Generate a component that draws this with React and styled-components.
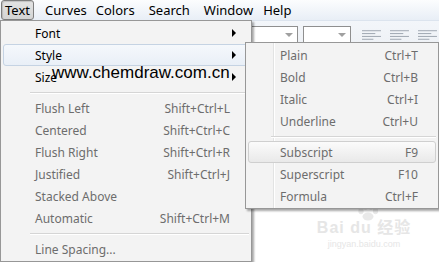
import React from "react";
import styled, { createGlobalStyle } from "styled-components";

const Global = createGlobalStyle`
  html, body { margin: 0; padding: 0; }
  body {
    background: #ffffff;
    font-family: "Noto Sans", "Open Sans", sans-serif;
    overflow: hidden;
  }
`;

const Window = styled.div`
  position: relative;
  width: 439px;
  height: 262px;
  display: flex;
  flex-direction: column;
  overflow: hidden;
`;

const MenuBar = styled.div`
  height: 21px;
  display: flex;
  align-items: center;
  padding-left: 1px;
  background: linear-gradient(#fcfdfe, #e8eef6);
  border-bottom: 1px solid #dce4ee;
  box-sizing: border-box;
`;

const BarItem = styled.div`
  font-size: 13px;
  line-height: 18px;
  color: #000;
  padding: 0 3px;
  margin-right: ${(p) => p.$gap || 1}px;
  border: 1px solid ${(p) => (p.$open ? "#7e7e7e" : "transparent")};
  border-radius: 3px;
  background: ${(p) => (p.$open ? "linear-gradient(#e4e4e4, #d4d4d4)" : "transparent")};
  box-shadow: ${(p) => (p.$open ? "inset 1px 1px 1px rgba(0,0,0,0.15)" : "none")};
`;

const Toolbar = styled.div`
  height: 27px;
  display: flex;
  align-items: center;
  gap: 5px;
  padding-left: 230px;
  background: linear-gradient(#f3f6fa, #eef1f5);
  box-sizing: border-box;
`;

const Combo = styled.div`
  width: ${(p) => p.$w}px;
  height: 17px;
  border: 1px solid #8f8f8f;
  background: #fff;
  display: flex;
  justify-content: flex-end;
  align-items: center;
  padding-right: 4px;
  box-sizing: border-box;
  &::after {
    content: "";
    border-left: 4px solid transparent;
    border-right: 4px solid transparent;
    border-top: 4px solid #a0a0a0;
  }
`;

const AlignIcon = styled.svg`
  width: 22px;
  height: 12px;
  margin-left: ${(p) => p.$ml || 0}px;
`;

const Canvas = styled.div`
  flex: 1;
  background: #ffffff;
`;

const Menu = styled.div`
  position: absolute;
  left: ${(p) => p.$left}px;
  top: ${(p) => p.$top}px;
  width: ${(p) => p.$w}px;
  padding: 1px 0 1px;
  background: #f3f3f3;
  border: 1px solid #979797;
  box-shadow: 2px 2px 2px rgba(0, 0, 0, 0.35);
  box-sizing: border-box;
  display: flex;
  flex-direction: column;
  z-index: ${(p) => p.$z || 1};
  ${(p) =>
    p.$gutter
      ? `background-image: linear-gradient(90deg, transparent 27px, #e2e3e3 27px, #e2e3e3 28px, #ffffff 28px, #ffffff 29px, transparent 29px);`
      : ""}
`;

const Row = styled.div`
  height: 22px;
  margin: 0 2px;
  display: flex;
  align-items: center;
  padding: 0 ${(p) => p.$pr}px 0 ${(p) => p.$pl}px;
  font-size: 12px;
  color: ${(p) => (p.$enabled ? "#000" : "#6d6d6d")};
  border: 1px solid transparent;
  border-radius: 3px;
  box-sizing: border-box;
  ${(p) =>
    p.$hover === "blue" &&
    `border-color: #c5d3e3; background: linear-gradient(#f5f8fc, #e9eff7);`}
  ${(p) =>
    p.$hover === "grey" &&
    `border-color: #cfcfcf; background: linear-gradient(#fbfbfb, #e9e9e9);`}
`;

const Label = styled.span`
  flex: 1;
  white-space: nowrap;
`;

const Shortcut = styled.span`
  white-space: nowrap;
  margin-right: ${(p) => p.$mr || 0}px;
`;

const Arrow = styled.span`
  width: 0;
  height: 0;
  border-top: 4px solid transparent;
  border-bottom: 4px solid transparent;
  border-left: 4px solid #000;
`;

const Separator = styled.div`
  height: 9px;
  margin-left: ${(p) => p.$ml}px;
  margin-right: 2px;
  display: flex;
  align-items: center;
  &::after {
    content: "";
    flex: 1;
    height: 1px;
    background: #d5d5d5;
    border-bottom: 1px solid #ffffff;
  }
`;

const Watermark = styled.div`
  position: absolute;
  left: 52px;
  top: 63px;
  font-family: "Liberation Sans", Arial, sans-serif;
  font-size: 17px;
  color: #000;
  z-index: 3;
  pointer-events: none;
`;

const Baidu = styled.div`
  position: absolute;
  left: 316px;
  top: 203px;
  width: 96px;
  display: flex;
  flex-direction: column;
  align-items: center;
  color: #e6e6e6;
  font-family: "Liberation Sans", "Noto Sans CJK SC", sans-serif;
  line-height: 1;
`;

const Paw = styled.svg`
  width: 22px;
  height: 18px;
  margin-left: 8px;
  margin-bottom: -1px;
`;

const BaiduTitle = styled.div`
  font-size: 16px;
  font-weight: bold;
  letter-spacing: 1px;
`;

const BaiduSub = styled.div`
  font-size: 9px;
  margin-top: 4px;
`;

const mainItems = [
  { label: "Font", enabled: true, arrow: true },
  { label: "Style", enabled: true, arrow: true, hover: "blue" },
  { label: "Size", enabled: true, arrow: true },
  "sep",
  { label: "Flush Left", key: "Shift+Ctrl+L" },
  { label: "Centered", key: "Shift+Ctrl+C" },
  { label: "Flush Right", key: "Shift+Ctrl+R" },
  { label: "Justified", key: "Shift+Ctrl+J" },
  { label: "Stacked Above" },
  { label: "Automatic", key: "Shift+Ctrl+M" },
  "sep",
  { label: "Line Spacing..." },
];

const styleItems = [
  { label: "Plain", key: "Ctrl+T" },
  { label: "Bold", key: "Ctrl+B" },
  { label: "Italic", key: "Ctrl+I" },
  { label: "Underline", key: "Ctrl+U" },
  "sep",
  { label: "Subscript", key: "F9", hover: "grey" },
  { label: "Superscript", key: "F10" },
  { label: "Formula", key: "Ctrl+F" },
];

function AlignLines({ ml }) {
  return (
    <AlignIcon $ml={ml} viewBox="0 0 22 12">
      <g stroke="#9aa3ad" strokeWidth="1">
        <line x1="0" y1="1.5" x2="20" y2="1.5" />
        <line x1="0" y1="4.5" x2="14" y2="4.5" />
        <line x1="0" y1="7.5" x2="20" y2="7.5" />
        <line x1="0" y1="10.5" x2="12" y2="10.5" />
      </g>
    </AlignIcon>
  );
}

function MenuList({ items, pl, pr, keyMr, sepMl }) {
  return items.map((it, i) =>
    it === "sep" ? (
      <Separator key={i} $ml={sepMl} />
    ) : (
      <Row key={i} $enabled={it.enabled} $hover={it.hover} $pl={pl} $pr={pr}>
        <Label>{it.label}</Label>
        {it.key && <Shortcut $mr={keyMr}>{it.key}</Shortcut>}
        {it.arrow && <Arrow />}
      </Row>
    )
  );
}

export default function App() {
  return (
    <>
      <Global />
      <Window>
        <MenuBar>
          <BarItem $open $gap={7}>Text</BarItem>
          <BarItem>Curves</BarItem>
          <BarItem $gap={6}>Colors</BarItem>
          <BarItem $gap={6}>Search</BarItem>
          <BarItem $gap={2}>Window</BarItem>
          <BarItem>Help</BarItem>
        </MenuBar>
        <Toolbar>
          <Combo $w={71} />
          <Combo $w={51} />
          <AlignLines ml={6} />
          <AlignLines ml={2} />
          <AlignLines ml={2} />
        </Toolbar>
        <Canvas />

        <Menu $left={0} $top={20} $w={252} $z={1}>
          <MenuList items={mainItems} pl={31} pr={12} keyMr={6} sepMl={29} />
        </Menu>

        <Menu $left={245} $top={42} $w={194} $z={2} $gutter>
          <MenuList items={styleItems} pl={31} pr={17} keyMr={0} sepMl={25} />
        </Menu>

        <Watermark>www.chemdraw.com.cn</Watermark>

        <Baidu>
          <Paw viewBox="0 0 22 18">
            <g fill="#e9e9e9">
              <ellipse cx="4" cy="8" rx="2.6" ry="3.2" />
              <ellipse cx="8.5" cy="3.5" rx="2.6" ry="3.2" />
              <ellipse cx="14" cy="3.5" rx="2.6" ry="3.2" />
              <ellipse cx="18.5" cy="8" rx="2.6" ry="3.2" />
              <ellipse cx="11" cy="13.5" rx="5.5" ry="4" />
            </g>
          </Paw>
          <BaiduTitle>Bai du 经验</BaiduTitle>
          <BaiduSub>jingyan.baidu.com</BaiduSub>
        </Baidu>
      </Window>
    </>
  );
}
